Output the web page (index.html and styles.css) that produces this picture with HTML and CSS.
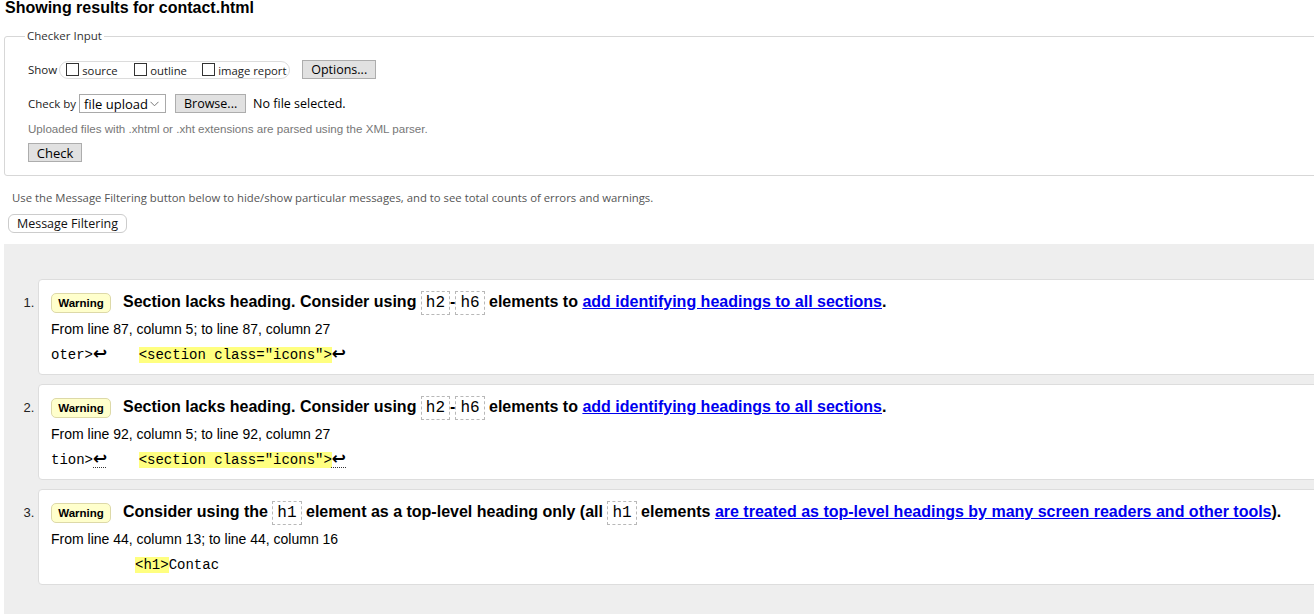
FILE: index.html
```html
<!DOCTYPE html>
<html lang="en">
<head>
<meta charset="utf-8">
<title>Showing results for contact.html</title>
<link rel="stylesheet" href="styles.css">
</head>
<body>
<div class="page">
  <h2 class="title">Showing results for contact.html</h2>
  <fieldset class="checker">
    <legend>Checker Input</legend>
    <div class="row row-show">
      <span class="lbl">Show</span>
      <span class="opts">
        <label class="opt"><span class="cb"></span>source</label>
        <label class="opt"><span class="cb"></span>outline</label>
        <label class="opt"><span class="cb"></span>image report</label>
      </span>
      <span class="btn btn-options">Options...</span>
    </div>
    <div class="row row-check">
      <span class="lbl">Check by</span>
      <span class="select"><span>file upload</span><svg class="chev" width="9" height="6" viewBox="0 0 9 6"><polyline points="0.5,0.8 4.5,4.8 8.5,0.8" fill="none" stroke="#777" stroke-width="1"/></svg></span>
      <span class="btn btn-browse">Browse...</span>
      <span class="nofile">No file selected.</span>
    </div>
    <p class="hint">Uploaded files with .xhtml or .xht extensions are parsed using the XML parser.</p>
    <span class="btn btn-check">Check</span>
  </fieldset>
  <p class="filter-note">Use the Message Filtering button below to hide/show particular messages, and to see total counts of errors and warnings.</p>
  <div class="filter-bar"><span class="btn-filter">Message Filtering</span></div>
  <ol class="messages">
    <li class="msg">
      <div class="msg-head"><span class="badge">Warning</span><span class="msg-text">Section lacks heading. Consider using <code>h2</code>-<code>h6</code> elements to <a href="#">add identifying headings to all sections</a>.</span></div>
      <div class="msg-loc">From line 87, column 5; to line 87, column 27</div>
      <div class="msg-ext">oter&gt;<span class="lf">↩</span>    <mark>&lt;section class="icons"&gt;</mark><span class="lf">↩</span></div>
    </li>
    <li class="msg">
      <div class="msg-head"><span class="badge">Warning</span><span class="msg-text">Section lacks heading. Consider using <code>h2</code>-<code>h6</code> elements to <a href="#">add identifying headings to all sections</a>.</span></div>
      <div class="msg-loc">From line 92, column 5; to line 92, column 27</div>
      <div class="msg-ext">tion&gt;<span class="lf dot">↩</span>    <mark>&lt;section class="icons"&gt;</mark><span class="lf dot">↩</span></div>
    </li>
    <li class="msg">
      <div class="msg-head"><span class="badge">Warning</span><span class="msg-text">Consider using the <code>h1</code> element as a top-level heading only (all <code>h1</code> elements <a href="#">are treated as top-level headings by many screen readers and other tools</a>).</span></div>
      <div class="msg-loc">From line 44, column 13; to line 44, column 16</div>
      <div class="msg-ext">          <mark>&lt;h1&gt;</mark>Contac</div>
    </li>
  </ol>
</div>
</body>
</html>
```
FILE: styles.css
```css
html {
  overflow: hidden;
}
body {
  margin: 0;
  background: #fff;
  color: #000;
  font-family: "Liberation Sans", Arial, sans-serif;
}
.page {
  width: 1340px;
}
.title {
  margin: 0 0 0 5px;
  height: 16px;
  font-size: 16px;
  line-height: 16px;
  font-weight: bold;
}
.checker {
  margin: 12px 0 0 4px;
  padding: 0 0 13px 23px;
  border: 1px solid #d7d7d7;
  border-radius: 3px;
  min-width: 0;
  font-family: "Open Sans", sans-serif;
  font-size: 11.5px;
  color: #222;
}
.checker legend {
  margin-left: -3px;
  padding: 0 2px;
  font-size: 11.5px;
  line-height: 16px;
  color: #333;
}
.row {
  display: flex;
  align-items: center;
  height: 19px;
}
.row-show {
  margin-top: 16px;
}
.row-check {
  margin-top: 15px;
}
.lbl {
  margin-right: 2px;
}
.row-check .lbl {
  margin-right: 3px;
}
.opts {
  display: flex;
  align-items: center;
  width: 231px;
  height: 18px;
  box-sizing: border-box;
  border: 1px solid #dcdcdc;
  border-radius: 9px;
  padding: 0 0 0 6px;
  margin-top: 1px;
  white-space: nowrap;
}
.opt {
  display: flex;
  align-items: center;
  width: 68px;
  font-size: 11.3px;
  color: #222;
}
.opt:last-child {
  width: auto;
}
.cb {
  width: 13px;
  height: 13px;
  box-sizing: border-box;
  border: 1px solid #333;
  background: #fff;
  margin-right: 3px;
  margin-top: -2px;
}
.btn {
  display: inline-flex;
  align-items: center;
  justify-content: center;
  box-sizing: border-box;
  height: 19px;
  background: #e1e1e1;
  border: 1px solid #adadad;
  font-family: "Open Sans", sans-serif;
  font-size: 12.5px;
  color: #000;
}
.btn-options {
  width: 74px;
  margin-left: 12px;
  margin-top: -1px;
}
.select {
  display: flex;
  align-items: center;
  justify-content: space-between;
  box-sizing: border-box;
  width: 87px;
  height: 19px;
  padding: 0 6px 0 4px;
  border: 1px solid #a9a9a9;
  background: #fff;
  font-size: 13px;
  color: #000;
}
.btn-browse {
  width: 71px;
  margin-left: 9px;
}
.nofile {
  margin-left: 7px;
  font-size: 12.5px;
  color: #000;
}
.hint {
  margin: 8px 0 0;
  line-height: 15px;
  font-family: "Liberation Sans", Arial, sans-serif;
  font-size: 11.6px;
  color: #777;
}
.btn-check {
  display: flex;
  width: 54px;
  margin-top: 7px;
  font-size: 13px;
}
.filter-note {
  margin: 14px 0 0 12px;
  line-height: 15px;
  font-family: "Open Sans", sans-serif;
  font-size: 11.33px;
  color: #555;
}
.filter-bar {
  display: flex;
  margin: 9px 0 0 8px;
}
.btn-filter {
  display: flex;
  align-items: center;
  justify-content: center;
  box-sizing: border-box;
  width: 119px;
  height: 19px;
  border: 1px solid #ccc;
  border-radius: 6px;
  background: #fff;
  font-family: "Open Sans", sans-serif;
  font-size: 12.5px;
  color: #111;
}
.messages {
  margin: 11px 0 0 4px;
  padding: 35px 0 40px 34px;
  background: #eee;
  list-style: decimal outside;
  font-family: "Liberation Sans", Arial, sans-serif;
}
.msg {
  margin-bottom: 9px;
  padding: 10px 0 10px 12px;
  background: #fff;
  border: 1px solid #ddd;
  border-radius: 4px;
  font-size: 13px;
  color: #000;
}
.msg::marker {
  font-size: 13px;
  color: #222;
}
.msg-head {
  display: flex;
  align-items: center;
  height: 25px;
  white-space: nowrap;
}
.badge {
  flex: none;
  box-sizing: border-box;
  width: 60px;
  height: 20px;
  line-height: 18px;
  margin-right: 12px;
  border: 1px solid #ddd9a8;
  border-radius: 5px;
  background: #ffffcc;
  text-align: center;
  font-size: 11.5px;
  font-weight: bold;
}
.msg-text {
  font-size: 16px;
  font-weight: bold;
  line-height: 25px;
}
.msg-text code {
  padding: 2px 4px;
  border: 1px dashed #b8b8b8;
  font-family: "Liberation Mono", "Courier New", monospace;
  font-size: 16px;
  font-weight: normal;
}
.msg-text a {
  color: #0000ee;
  text-decoration: underline;
}
.msg-loc {
  margin-top: 5px;
  line-height: 18px;
  font-size: 14px;
}
.msg-ext {
  margin-top: 8px;
  line-height: 18px;
  font-family: "Liberation Mono", "Courier New", monospace;
  font-size: 14px;
  white-space: pre;
}
.msg-ext mark {
  background: #ffff80;
  color: inherit;
}
.lf {
  display: inline-block;
  width: 12px;
  font-family: "DejaVu Sans", sans-serif;
  font-size: 17px;
  font-weight: bold;
  line-height: 14px;
}
.lf.dot {
  text-decoration: underline dotted #333;
  text-decoration-thickness: 1px;
  text-underline-offset: 3px;
}
```
